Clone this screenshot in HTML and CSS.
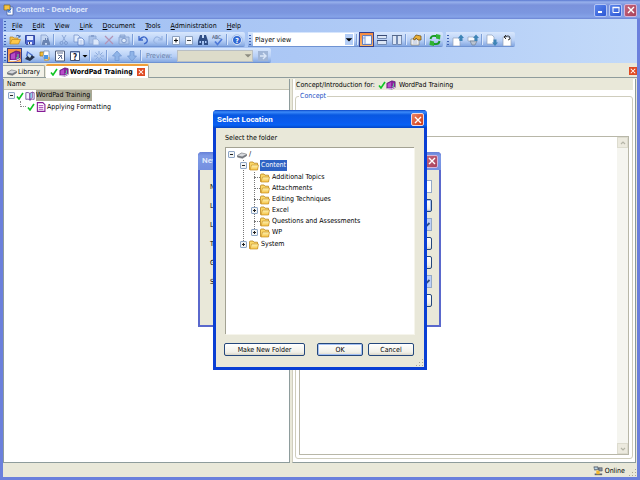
FILE: index.html
```html
<!DOCTYPE html>
<html lang="en">
<head>
<meta charset="utf-8">
<title>Content - Developer</title>
<link rel="stylesheet" href="styles.css">
</head>
<body>
<svg class="sprite" aria-hidden="true">
  <defs>
    <linearGradient id="gold" x1="0" y1="0" x2="0" y2="1"><stop offset="0" stop-color="#fff6b8"/><stop offset="1" stop-color="#f5c040"/></linearGradient>
  </defs>
  <symbol id="folder" viewBox="0 0 10 10"><path d="M.5 8.500V2q0-1 1-1h2.500l1 1.200h3.500v6.300z" fill="#fbd868" stroke="#b9841a" stroke-width=".8"/><path d="M1 9 2.500 4h7L8.500 9z" fill="url(#gold)" stroke="#c8922a" stroke-width=".7"/></symbol>
  <symbol id="open" viewBox="0 0 12 12"><path d="M1 10V3h3l1 1h4v2" fill="#f3c14a" stroke="#b88420" stroke-width=".7"/><path d="m1 10 2-4.500h8.500l-2 4.500z" fill="#ffc84a" stroke="#c08a20" stroke-width=".7"/><path d="M7 2q2-2 4 1M11 1v2H9" fill="none" stroke="#3f66a8"/></symbol>
  <symbol id="save" viewBox="0 0 12 12"><path d="M1.500 1.500h9v9h-8l-1-1z" fill="#4d67cf" stroke="#3448a0"/><path d="M3 2h6v4H3z" fill="#dfe9ff"/><path d="M4 8h4v2.500H4z" fill="#eef"/><path d="M5 8h1v2H5z" fill="#334"/></symbol>
  <symbol id="find" viewBox="0 0 12 12"><path d="M2 1h5l2 2v8H2z" fill="#c4d6f1" stroke="#7f9ac8" stroke-width=".7"/><path d="M4 6h2v-2h1v2h1V4h1l2 5v2H8V9H6v2H3V9z" fill="#6b84b2"/></symbol>
  <symbol id="cut" viewBox="0 0 12 12"><path d="m8 1-4 7M4 1l4 7" fill="none" stroke="#8faad8"/><circle cx="3.500" cy="9" r="1.500" fill="none" stroke="#7d9bd0"/><circle cx="8" cy="9" r="1.500" fill="none" stroke="#7d9bd0"/></symbol>
  <symbol id="copy" viewBox="0 0 12 12"><path d="M1 1h4l2 2v5H1z" fill="#dce9fc" stroke="#7894cc" stroke-width=".8"/><path d="M5 4h4l2 2v5H5z" fill="#edf4ff" stroke="#5c7fc4" stroke-width=".8"/><path d="M6.500 7h3M6.500 9h3" stroke="#84a2da" stroke-width=".7"/></symbol>
  <symbol id="paste" viewBox="0 0 12 12"><path d="M1 2h7v8H1z" fill="#a9c1e8" stroke="#89a5d4" stroke-width=".8"/><path d="M3 1h3v2H3z" fill="#88a2cf"/><path d="M5 5h4l2 2v4H5z" fill="#dce8fa" stroke="#91abd8" stroke-width=".8"/></symbol>
  <symbol id="delete" viewBox="0 0 12 12"><path d="m2 2 8 8M10 2 2 10" stroke="#b394b6" stroke-width="1.200"/></symbol>
  <symbol id="camera" viewBox="0 0 12 12"><path d="M1 3h10v7H1zM2 1h5v2H2z" fill="#b4c9ec" stroke="#829fce" stroke-width=".8"/><circle cx="6" cy="6.500" r="2.300" fill="#dce9fa" stroke="#7d99cb"/></symbol>
  <symbol id="undo" viewBox="0 0 12 12"><path d="M2 2v4h4M2.500 5.500Q7 1 9.500 4.500T7 10" fill="none" stroke="#3c67c9" stroke-width="1.300"/></symbol>
  <symbol id="redo" viewBox="0 0 12 12"><path d="M10 2v4H6M9.500 5.500Q5 1 2.500 4.500T5 10" fill="none" stroke="#98b4e2" stroke-width="1.200"/></symbol>
  <symbol id="plus" viewBox="0 0 12 12"><path d="M2.500 2.500h7v8h-7z" fill="#f8fbff" stroke="#8298b8" stroke-width=".9"/><path d="M4 6.500h4M6 4.500v4" stroke="#111" stroke-width="1.100"/></symbol>
  <symbol id="minus" viewBox="0 0 12 12"><path d="M2.500 2.500h7v8h-7z" fill="#f4f8ff" stroke="#8298b8" stroke-width=".9"/><path d="M4 6.500h4" stroke="#444"/></symbol>
  <symbol id="binoc" viewBox="0 0 12 12"><path d="M3 1h2v3h2V1h2l2 6v4H7V7H5v4H1V7z" fill="#304e86"/><path d="M2.500 7h1.500v2H2.500zM8 7h1.500v2H8z" fill="#a9c8f8"/></symbol>
  <symbol id="grid" viewBox="0 0 12 12"><path d="M1.500 1.500h9v9h-9z" fill="#dce9ff" stroke="#647ebd"/><path d="M4 2v8M2 4h2" stroke="#829ace" stroke-width=".8"/><path d="M5 3h5v6H5z" fill="#f7fbff"/></symbol>
  <symbol id="rows" viewBox="0 0 12 12"><path d="M1.500 1.500h9v3h-9zM1.500 6.500h9v4h-9z" fill="#dce6f5" stroke="#748bb2"/><path d="M1 1.500h10M1 6.500h10" stroke="#394b75"/></symbol>
  <symbol id="cols" viewBox="0 0 12 12"><path d="M1.500 1.500h4v9h-4zM6.500 1.500h4v9h-4z" fill="#dce6f5" stroke="#748bb2"/><path d="M1 1.500h10" stroke="#566889"/></symbol>
  <symbol id="props" viewBox="0 0 12 12"><path d="M1 5h8v6H1z" fill="#fff" stroke="#8b8b80" stroke-width=".8"/><path d="M2.500 7h5M2.500 9h5" stroke="#8094ba" stroke-width=".7"/><path d="m3 5 3-4 5 1v4H8L6 4 5 6z" fill="#e9af36" stroke="#75551c" stroke-width=".8"/></symbol>
  <symbol id="refresh" viewBox="0 0 12 12"><path d="M1.500 5Q2 1.500 6 2h2M10.500 7Q10 10.500 6 10H4" fill="none" stroke="#189a24" stroke-width="1.800"/><path d="M7 0 11.500 1 11 5.500 7 4.500zM5 12 .5 11 1 6.500l4 1z" fill="#30b432"/></symbol>
  <symbol id="doc-up" viewBox="0 0 12 12"><path d="M1 4h5l2 2v6H1z" fill="#fff" stroke="#8fa1bc" stroke-width=".7"/><path d="M9 .5 12 4h-1.500v3h-3V4H6z" fill="#3e84b6"/></symbol>
  <symbol id="globe-up" viewBox="0 0 12 12"><path d="M1 3h7v4H1z" fill="#f7f9fc" stroke="#8fa1bc" stroke-width=".7"/><path d="M3 7h7l-2 4H5z" fill="#b9c3d0" stroke="#6f8096" stroke-width=".7"/><path d="M9 .5 12 4h-1.500v3h-3V4H6z" fill="#3e84b6"/></symbol>
  <symbol id="doc-down" viewBox="0 0 12 12"><path d="M1 1h5l2 2v7H1z" fill="#fff" stroke="#8fa1bc" stroke-width=".7"/><path d="M9 12 6 8.500h1.500v-3h3v3H12z" fill="#3e84b6"/></symbol>
  <symbol id="doc-back" viewBox="0 0 12 12"><path d="M2 3h5l3 2v7H2z" fill="#fff" stroke="#8fa1bc" stroke-width=".7"/><path d="M4 3q5-3 5 2l-2 1M5 1 3 3l2 2" fill="none" stroke="#333" stroke-width="1"/></symbol>
  <symbol id="book" viewBox="0 0 12 12"><path d="m1 4 6-3 4 1v7l-4 2-6-1z" fill="#8c239e" stroke="#4e0f67" stroke-width=".7"/><path d="m2 4.500 4-1.800v6L2 9z" fill="#b84cc9"/><path d="M1 10.500h6l4-2" stroke="#eef" fill="none"/><path d="M9 4v4H7" fill="none" stroke="#52e090"/></symbol>
  <symbol id="layers" viewBox="0 0 12 12"><path d="m3 1 6 4-1 5-6-4z" fill="#4b6fd0"/><path d="m5 4 6 3-5 4-5-2z" fill="#26334d"/><path d="m4 3 3.500 2.500L6 8 3.500 6z" fill="#bfdcf6"/></symbol>
  <symbol id="pages" viewBox="0 0 12 12"><path d="M1 2h6v4H1z" fill="#f4be35" stroke="#8f6b18" stroke-width=".7"/><path d="M5 1h5v8l-3 2-3-4z" fill="#fff" stroke="#7089a9" stroke-width=".7"/><path d="M5 5h4v4H5z" fill="#4a96e7"/><path d="M5 10h5V7" fill="none" stroke="#e3a325"/></symbol>
  <symbol id="sheet" viewBox="0 0 12 12"><path d="M1.500 1h9v10h-9z" fill="#fff" stroke="#4d5b79"/><path d="M3 3h6M4 9l4-4M4 5q4 0 4 4" fill="none" stroke="#5c6c91"/></symbol>
  <symbol id="spark" viewBox="0 0 12 12"><path d="M6 1v10M1 6h10M2.500 2.500l7 7M9.500 2.500l-7 7" stroke="#8ba9da"/><circle cx="6" cy="6" r="1.800" fill="#b9cfef"/></symbol>
  <symbol id="up" viewBox="0 0 12 12"><path d="m6 1 4.500 5H8v4.500H4V6H1.500z" fill="#8fb4e8" stroke="#7298d2" stroke-width=".8"/></symbol>
  <symbol id="down" viewBox="0 0 12 12"><path d="m6 11 4.500-5H8V1.500H4V6H1.500z" fill="#8fb4e8" stroke="#7298d2" stroke-width=".8"/></symbol>
  <symbol id="go" viewBox="0 0 12 12"><path d="M1 1h10v10H1z" fill="#a0b5d6"/><path d="M3 6h5M6 3l3 3-3 3" stroke="#dbe7f8" fill="none" stroke-width="1.400"/></symbol>
  <symbol id="drive" viewBox="0 0 12 10"><path d="m.5 5.500 5-3 6 1.500v2l-5 3-6-1.500z" fill="#777b82" stroke="#55585e" stroke-width=".6"/><path d="m.8 5.500 4.800-2.700 5.500 1.300-4.800 2.800z" fill="#d6d8dc"/></symbol>
  <symbol id="check" viewBox="0 0 8 8"><path d="m1 4.500 2 2.500L7 1" fill="none" stroke="#10c424" stroke-width="1.600"/></symbol>
  <symbol id="openbook" viewBox="0 0 12 12"><path d="M1 2q3-1 5 1v8q-2-2-5-1zM11 2Q8 1 6 3v8q2-2 5-1z" fill="#f6f2ff" stroke="#5c3489" stroke-width=".9"/><path d="m6 3 3-2v7L6 10z" fill="#8cd3ea" stroke="#8b2b9b" stroke-width=".7"/></symbol>
  <symbol id="topic" viewBox="0 0 10 11"><path d="M1 .7h6l2.300 2.300v7.300H1z" fill="#fff" stroke="#851b96" stroke-width="1.200"/><path d="M2.500 4h5M2.500 6h5M2.500 8h5" stroke="#a43ab2"/></symbol>
  <symbol id="app" viewBox="0 0 12 12"><path d="M4 3h6v8H4z" fill="#fff" stroke="#4d66a4" stroke-width=".8"/><path d="M1 1h6v5H1z" fill="#f7c443" stroke="#7f651d" stroke-width=".7"/><path d="M5 7q3 0 3-3M8 8H5V5" stroke="#2869ce" fill="none"/></symbol>
  <symbol id="x" viewBox="0 0 8 8"><path d="m1 1 6 6m0-6-6 6" stroke="#fff" stroke-width="1.400"/></symbol>
  <symbol id="min" viewBox="0 0 8 8"><path d="M1 6h4" stroke="#fff" stroke-width="2"/></symbol>
  <symbol id="max" viewBox="0 0 8 8"><path d="M1 1.500h6v5H1z" fill="none" stroke="#fff"/><path d="M.5 1.500h7" stroke="#fff" stroke-width="1.500"/></symbol>
  <symbol id="online" viewBox="0 0 12 12"><path d="M1 1h5l1 3-5 1zM7 2h4v4H7z" fill="#8792a2" stroke="#3d4550" stroke-width=".6"/><path d="M2 9h9v2H2z" fill="#5a6371"/><path d="m4 5 4 1v4H4z" fill="#f3b92c"/><path d="M2 2h3v1.500H2z" fill="#bddcf0"/></symbol>
  <symbol id="chev" viewBox="0 0 6 6"><path d="m1 2 2 2 2-2" fill="none" stroke="currentColor" stroke-width="1.200"/></symbol>
  <symbol id="chevup" viewBox="0 0 6 6"><path d="m1 4 2-2 2 2" fill="none" stroke="currentColor" stroke-width="1.200"/></symbol>
  <symbol id="tri" viewBox="0 0 6 6"><path d="M.5 2h5L3 4.500z" fill="currentColor"/></symbol>
  <symbol id="size" viewBox="0 0 8 8"><path d="M6 0h1v1H6zM3 3h1v1H3zM6 3h1v1H6zM0 6h1v1H0zM3 6h1v1H3zM6 6h1v1H6z" fill="#a9a794"/></symbol>
</svg>

<div class="app">
  <header class="titlebar">
    <svg class="i12"><use href="#app"/></svg>
    <h1>Content - Developer</h1>
    <div class="winbtns">
      <button class="wb" aria-label="Minimize"><svg class="i8"><use href="#min"/></svg></button>
      <button class="wb" aria-label="Maximize"><svg class="i8"><use href="#max"/></svg></button>
      <button class="wb wb-close dim" aria-label="Close"><svg class="i8"><use href="#x"/></svg></button>
    </div>
  </header>

  <div class="bars">
    <nav class="menu">
      <span class="grip"></span>
      <button><u>F</u>ile</button><button><u>E</u>dit</button><button><u>V</u>iew</button><button><u>L</u>ink</button><button><u>D</u>ocument</button><button><u>T</u>ools</button><button><u>A</u>dministration</button><button><u>H</u>elp</button>
    </nav>
    <div class="toolrow">
      <div class="toolbar">
        <span class="grip"></span>
        <button class="tb" aria-label="Open"><svg class="i12"><use href="#open"/></svg></button>
        <button class="tb" aria-label="Save"><svg class="i12"><use href="#save"/></svg></button>
        <button class="tb" aria-label="Preview"><svg class="i12"><use href="#find"/></svg></button>
        <span class="sep"></span>
        <button class="tb" aria-label="Cut"><svg class="i12"><use href="#cut"/></svg></button>
        <button class="tb" aria-label="Copy"><svg class="i12"><use href="#copy"/></svg></button>
        <button class="tb" aria-label="Paste"><svg class="i12"><use href="#paste"/></svg></button>
        <button class="tb" aria-label="Delete"><svg class="i12"><use href="#delete"/></svg></button>
        <button class="tb" aria-label="Capture"><svg class="i12"><use href="#camera"/></svg></button>
        <span class="sep"></span>
        <button class="tb" aria-label="Undo"><svg class="i12"><use href="#undo"/></svg></button>
        <button class="tb" aria-label="Redo"><svg class="i12"><use href="#redo"/></svg></button>
        <span class="sep"></span>
        <button class="tb slim" aria-label="Expand"><svg class="i12"><use href="#plus"/></svg></button>
        <button class="tb slim" aria-label="Collapse"><svg class="i12"><use href="#minus"/></svg></button>
        <button class="tb" aria-label="Find"><svg class="i12"><use href="#binoc"/></svg></button>
        <button class="tb" aria-label="Spelling"><svg class="i12" viewBox="0 0 12 12"><text x="0" y="5" font-size="5" fill="#333c60">ABC</text><path d="m3 7.500 2.500 3L10 5" fill="none" stroke="#4d78d8" stroke-width="1.700"/></svg></button>
        <span class="sep"></span>
        <button class="tb" aria-label="Help"><svg class="i12" viewBox="0 0 12 12"><circle cx="6" cy="6" r="5.200" fill="#f2f7ff" stroke="#90aee0" stroke-width=".8"/><circle cx="6" cy="6" r="4" fill="#2f67d2"/><text x="6" y="8.500" font-size="7" font-weight="bold" text-anchor="middle" fill="#fff">?</text></svg></button>
      </div>
      <div class="toolbar">
        <span class="grip"></span>
        <div class="combo view"><select aria-label="View"><option>Player view</option></select><svg class="i6"><use href="#tri"/></svg></div>
        <span class="sep"></span>
        <button class="tb on" aria-label="Layout"><svg class="i12"><use href="#grid"/></svg></button>
        <button class="tb" aria-label="Split rows"><svg class="i12"><use href="#rows"/></svg></button>
        <button class="tb" aria-label="Split columns"><svg class="i12"><use href="#cols"/></svg></button>
        <span class="sep"></span>
        <button class="tb" aria-label="Properties"><svg class="i12"><use href="#props"/></svg></button>
        <span class="sep"></span>
        <button class="tb" aria-label="Refresh"><svg class="i12"><use href="#refresh"/></svg></button>
      </div>
      <div class="toolbar">
        <span class="grip"></span>
        <button class="tb" aria-label="Check in"><svg class="i12"><use href="#doc-up"/></svg></button>
        <button class="tb" aria-label="Check in all"><svg class="i12"><use href="#globe-up"/></svg></button>
        <span class="sep"></span>
        <button class="tb" aria-label="Check out"><svg class="i12"><use href="#doc-down"/></svg></button>
        <button class="tb" aria-label="Cancel check out"><svg class="i12"><use href="#doc-back"/></svg></button>
      </div>
    </div>
    <div class="toolrow">
      <div class="toolbar">
        <span class="grip"></span>
        <button class="tb on" aria-label="Module"><svg class="i12"><use href="#book"/></svg></button>
        <button class="tb" aria-label="Section"><svg class="i12"><use href="#layers"/></svg></button>
        <button class="tb" aria-label="Topic"><svg class="i12"><use href="#pages"/></svg></button>
        <button class="tb" aria-label="Existing"><svg class="i12"><use href="#sheet"/></svg></button>
        <button class="tb" aria-label="Question"><svg class="i12" viewBox="0 0 12 12"><path d="M1.500 1.500h9v9h-9z" fill="#fff" stroke="#435275"/><path d="M2 2h8" stroke="#5473b5"/><text x="6" y="9.500" font-size="8" font-weight="bold" text-anchor="middle" fill="#223">?</text></svg></button>
        <button class="tb tiny" aria-label="More"><svg class="i6"><use href="#tri"/></svg></button>
        <span class="sep"></span>
        <button class="tb slim" aria-label="New link"><svg class="i12"><use href="#spark"/></svg></button>
        <span class="sep"></span>
        <button class="tb" aria-label="Move up"><svg class="i12"><use href="#up"/></svg></button>
        <button class="tb" aria-label="Move down"><svg class="i12"><use href="#down"/></svg></button>
        <span class="sep"></span>
        <label class="off" for="preview">Preview:</label>
        <div class="combo preview"><select id="preview" disabled></select><svg class="i6"><use href="#tri"/></svg></div>
        <button class="tb" aria-label="Go"><svg class="i12"><use href="#go"/></svg></button>
      </div>
    </div>
  </div>

  <div class="tabs">
    <button class="tab"><svg class="i10"><use href="#drive"/></svg>Library</button>
    <button class="tab current"><svg class="i8"><use href="#check"/></svg><svg class="i10"><use href="#book"/></svg>WordPad Training<span class="redx"><svg class="i6"><use href="#x"/></svg></span></button>
    <button class="redx end" aria-label="Close tab"><svg class="i6"><use href="#x"/></svg></button>
  </div>

  <main class="panes">
    <section class="outline">
      <h2>Name</h2>
      <ul class="doc">
        <li><i class="exp"></i><svg class="i8"><use href="#check"/></svg><svg class="i10"><use href="#openbook"/></svg><span class="marked">WordPad Training</span></li>
        <li class="sub"><i class="elbow"></i><svg class="i8"><use href="#check"/></svg><svg class="i10"><use href="#topic"/></svg><span>Applying Formatting</span></li>
      </ul>
    </section>
    <section class="detail">
      <div class="about">Concept/Introduction for: <svg class="i8"><use href="#check"/></svg><svg class="i10"><use href="#book"/></svg><span>WordPad Training</span></div>
      <fieldset>
        <legend>Concept</legend>
        <div class="editor">
          <textarea aria-label="Concept"></textarea>
          <div class="scroll"><button aria-label="Scroll up"><svg class="i6"><use href="#chevup"/></svg></button><button aria-label="Scroll down"><svg class="i6"><use href="#chev"/></svg></button></div>
        </div>
      </fieldset>
    </section>
  </main>

  <footer class="status"><svg class="i10"><use href="#online"/></svg><span>Online</span><svg class="i8 corner"><use href="#size"/></svg></footer>
</div>

<div class="dialog back">
  <div class="dlgtitle"><h2>New</h2><button class="wb wb-close dim" aria-label="Close"><svg class="i8"><use href="#x"/></svg></button></div>
  <div class="form">
    <label for="f1">N</label><input id="f1" type="text">
    <label for="f2">L</label><button class="btn focus" id="f2"></button>
    <label for="f3">L</label><div class="drop"><select id="f3"></select><svg class="i6"><use href="#chev"/></svg></div>
    <label for="f4">T</label><button class="btn" id="f4"></button>
    <label for="f5">G</label><button class="btn" id="f5"></button>
    <label for="f6">S</label><div class="drop"><select id="f6"></select><svg class="i6"><use href="#chev"/></svg></div>
    <span></span><button class="btn" aria-label="Cancel new"></button>
  </div>
</div>

<div class="dialog front" role="dialog" aria-labelledby="dt">
  <div class="dlgtitle"><h2 id="dt">Select Location</h2><button class="wb wb-close" aria-label="Close"><svg class="i8"><use href="#x"/></svg></button></div>
  <div class="body">
    <p>Select the folder</p>
    <div class="treebox">
      <ul class="tree">
        <li><div class="row"><i class="exp"></i><svg class="i10"><use href="#drive"/></svg><span>/</span></div>
          <ul>
            <li><div class="row"><i class="exp"></i><svg class="i10"><use href="#folder"/></svg><span class="sel">Content</span></div>
              <ul class="deep">
                <li><div class="row"><i class="leaf"></i><svg class="i10"><use href="#folder"/></svg><span>Additional Topics</span></div></li>
                <li><div class="row"><i class="leaf"></i><svg class="i10"><use href="#folder"/></svg><span>Attachments</span></div></li>
                <li><div class="row"><i class="leaf"></i><svg class="i10"><use href="#folder"/></svg><span>Editing Techniques</span></div></li>
                <li><div class="row"><i class="exp closed"></i><svg class="i10"><use href="#folder"/></svg><span>Excel</span></div></li>
                <li><div class="row"><i class="leaf"></i><svg class="i10"><use href="#folder"/></svg><span>Questions and Assessments</span></div></li>
                <li><div class="row"><i class="exp closed"></i><svg class="i10"><use href="#folder"/></svg><span>WP</span></div></li>
              </ul>
            </li>
            <li><div class="row"><i class="exp closed"></i><svg class="i10"><use href="#folder"/></svg><span>System</span></div></li>
          </ul>
        </li>
      </ul>
    </div>
    <div class="actions">
      <button class="btn wide">Make New Folder</button>
      <button class="btn focus">OK</button>
      <button class="btn">Cancel</button>
    </div>
  </div>
  <svg class="i8 corner"><use href="#size"/></svg>
</div>
</body>
</html>
```
FILE: styles.css
```css
:root {
  --face: #e9e8d9;
  --blue: #0a3fd4;
  --ui: "DejaVu Sans Condensed", "DejaVu Sans", sans-serif;
}

* { box-sizing: border-box; }

body {
  margin: 0;
  font: 7px/10px var(--ui);
  color: #000;
}

button, input, select, textarea {
  font: inherit;
  color: inherit;
  margin: 0;
  padding: 0;
  border: 0;
  background: none;
}

select { appearance: none; }
h1, h2, p, ul { margin: 0; padding: 0; font-weight: normal; font-size: inherit; }
ul { list-style: none; }
svg { flex: none; display: block; }
u { text-underline-offset: 1px; }

.sprite { position: absolute; width: 0; height: 0; }
.i6 { width: 6px; height: 6px; }
.i8 { width: 8px; height: 8px; }
.i10 { width: 10px; height: 10px; }
.i12 { width: 12px; height: 12px; }

.app {
  min-height: 100vh;
  display: flex;
  flex-direction: column;
  background: var(--face);
  border: solid #6b80dc;
  border-width: 0 3px 3px;
}

.titlebar {
  height: 19px;
  margin: 0 -3px;
  padding: 1px 3px 0;
  display: flex;
  align-items: center;
  gap: 1px;
  background: linear-gradient(#5a78d0, #98b1ec 2px, #7a92dc 5px, #7c97e0 13px, #86a3e8 17px, #6a84d4);
}

.titlebar h1, .dlgtitle h2 {
  flex: 1;
  font: bold 8px/12px Roboto, sans-serif;
  color: #dce6fb;
}

.winbtns { display: flex; gap: 2px; }

.wb {
  width: 13px;
  height: 13px;
  display: grid;
  place-items: center;
  border: 1px solid #b4c5f4;
  border-radius: 2px;
  background: linear-gradient(135deg, #5c86ec, #2c57d4);
}

.wb-close { background: linear-gradient(135deg, #ee8464, #cc3a14); border-color: #f0d8dc; }
.wb-close.dim { background: linear-gradient(135deg, #c4677c, #a8405a); border-color: #d6b4d8; }

.bars {
  display: flex;
  flex-direction: column;
  background: linear-gradient(90deg, #9fbef2, #b0cbf6 60%, #c3daf9);
}

.menu { height: 13px; display: flex; align-items: center; }
.menu button { padding: 0 5px; }

.grip {
  width: 2px;
  height: 10px;
  margin: 0 1px;
  background: repeating-linear-gradient(#3f62b4 0 1px, transparent 1px 3px);
}

.toolrow { display: flex; gap: 3px; }
.toolrow + .toolrow { margin-top: 1px; }

.toolbar {
  height: 15px;
  display: flex;
  align-items: center;
  padding-right: 1px;
  border-radius: 0 2px 2px 0;
  background: linear-gradient(#d8e7fd, #b8d0f6 55%, #86a9e2 93%, #5a7fc4);
}

.tb { width: 15px; height: 15px; display: grid; place-items: center; }
.tb.slim { width: 13px; }
.tb.tiny { width: 6px; }
.tb.on { border: 1px solid #34408c; background: linear-gradient(#f58a40, #fbb668); }
.sep { width: 1px; height: 11px; margin: 0 2px 0 1px; background: #7d9fd8; box-shadow: 1px 0 #dbe8fc; }

.combo, .drop { display: flex; align-items: center; background: #fff; }
.combo select, .drop select { flex: 1; min-width: 0; height: 100%; padding-left: 2px; }
.combo svg { width: 8px; height: 11px; background: #b3cdf6; }
.combo.view { width: 101px; height: 13px; padding-right: 1px; margin: 0 1px; }
.combo.preview { width: 76px; height: 12px; margin: 0 2px 0 5px; background: #dddcca; color: #8c8c80; border: 1px solid #b9bfc4; }
.combo.preview svg { background: none; }
.off { color: #667da8; padding-left: 3px; }

.tabs {
  height: 14px;
  margin-top: 1px;
  display: flex;
  align-items: flex-end;
  gap: 1px;
  border-bottom: 1px solid #8f9c9c;
}

.tab {
  height: 12px;
  display: flex;
  align-items: center;
  gap: 1px;
  padding: 0 4px;
  border: solid #a3a89e;
  border-width: 1px 1px 0 0;
  border-radius: 0 2px 0 0;
  background: #f2f1e8;
}

.tab.current {
  height: 14px;
  margin-bottom: -1px;
  padding: 0 3px 0 4px;
  border-top: 2px solid #f0a03a;
  border-radius: 2px 2px 0 0;
  background: #fff;
  font-weight: bold;
}

.redx { width: 8px; height: 8px; background: #df4a22; display: grid; place-items: center; margin-left: 3px; }
.redx.end { margin: 0 0 2px auto; }

.panes {
  flex: 1;
  display: grid;
  grid-template-columns: 287fr 344fr;
  gap: 2px;
  padding: 1px 1px 0 0;
}

.outline, .detail { background: #fff; border: 1px solid #8e9c9c; border-top: 0; }
.outline h2 { height: 11px; padding-left: 3px; background: var(--face); border-bottom: 1px solid #c6c4b2; }
.doc li { height: 11px; display: flex; align-items: center; gap: 1px; padding-left: 4px; }
.doc li.sub { padding-left: 16px; }
.marked { background: #aaa794; height: 11px; padding: 0 2px 0 0; }
.elbow { width: 6px; height: 6px; margin-bottom: 6px; border: dotted #888; border-width: 0 0 1px 1px; }

.detail { display: flex; flex-direction: column; padding: 0 2px 3px; border-left-color: #d0cebe; }
.about { height: 11px; display: flex; align-items: center; padding-left: 1px; background: var(--face); }
.about .i8 { margin-left: 3px; }
.about span { margin-left: 3px; }

fieldset {
  flex: 1;
  display: flex;
  min-width: 0;
  margin: 1px 0 0;
  padding: 35px 3px 3px;
  border: 1px solid #cfcdbd;
  border-radius: 3px;
}

legend { padding: 0 1px; color: #1c4fc4; }
.editor { flex: 1; display: flex; border: 1px solid #b8b7a8; }
.editor textarea { flex: 1; min-width: 0; resize: none; }

.scroll { width: 11px; display: flex; flex-direction: column; justify-content: space-between; background: #f5f5f0; }
.scroll button { height: 11px; display: grid; place-items: center; color: #b5b5a8; background: #eceadf; border: 1px solid #dddccf; }

.status { height: 14px; padding-top: 2px; display: flex; align-items: center; justify-content: flex-end; gap: 2px; }
.status .corner { margin-left: 2px; align-self: flex-end; }

.dialog { position: absolute; background: var(--face); border-radius: 4px 4px 0 0; }

.dlgtitle {
  display: flex;
  align-items: center;
  height: 18px;
  border-radius: 4px 4px 0 0;
}

.back {
  left: 198px;
  top: 152px;
  width: 243px;
  height: 175px;
  border: solid #5a68cc;
  border-width: 0 2px 2px;
}

.back .dlgtitle { margin: 0 -2px; padding: 0 3px 0 4px; background: linear-gradient(#6680d8, #7f9ae6 4px, #748fe0); }

.form {
  display: grid;
  grid-template-columns: 1fr 30px;
  grid-template-rows: repeat(7, 13px);
  gap: 6px;
  align-items: center;
  padding: 10px 7px 0 10px;
}

.form input, .drop { height: 13px; border: 1px solid #93a9c8; background: #fff; }
.form .btn { height: 13px; }
.drop svg { width: 9px; height: 11px; background: #bdd0f8; color: #35507f; }

.front {
  left: 213px;
  top: 110px;
  width: 214px;
  border: solid var(--blue);
  border-width: 0 3px 3px;
}

.front .dlgtitle { margin: 0 -3px; padding: 1px 3px 0 4px; background: linear-gradient(#0a47c8, #3c8bfa 2px, #0858e2 5px, #0a5cf0 13px, #0862f4 15px, #0444c4); }
.front .dlgtitle h2 { color: #fff; }
.body { padding: 5px 10px 11px 8px; }
.body p { padding: 0 0 4px 1px; height: 14px; line-height: 10px; }

.treebox {
  height: 187px;
  margin-left: 1px;
  padding: 1px 2px;
  background: #fff;
  border: solid #a3a293;
  border-width: 1px 0 0 1px;
  box-shadow: 1px 1px #f6f5ec;
}

.tree ul { padding-left: 12px; position: relative; }
.tree .deep { padding-left: 11px; margin: 1px 0; }
.row { height: 11px; display: flex; align-items: center; gap: 2px; position: relative; }
.row span { line-height: 11px; padding-right: 1px; }
.row .sel { color: #fff; background: #2f63c4; box-shadow: -1px 0 #2f63c4; }

.exp {
  flex: none;
  width: 7px;
  height: 7px;
  border: 1px solid #8ea6c6;
  border-radius: 1px;
  background: linear-gradient(#222, #222) 50% 50% / 3px 1px no-repeat #f3f5f5;
  position: relative;
  z-index: 1;
}

.exp.closed {
  background: linear-gradient(#222, #222) 50% 50% / 3px 1px no-repeat, linear-gradient(#222, #222) 50% 50% / 1px 3px no-repeat, #f3f5f5;
}

.leaf { flex: none; width: 7px; height: 7px; }
.leaf::after { content: ""; display: block; margin: 3px 0 0 3px; width: 6px; border-top: 1px dotted #777; }

/* vertical guide that joins the siblings of a branch */
.tree ul::before {
  content: "";
  position: absolute;
  left: 15px;
  top: 0;
  bottom: 5px;
  border-left: 1px dotted #777;
}

.tree .deep::before { left: 14px; }

.actions { display: flex; gap: 5px; margin-top: 9px; }

.btn {
  height: 13px;
  width: 46px;
  border: 1px solid #24477c;
  border-radius: 2px;
  background: linear-gradient(#fff, #f1f0e8 75%, #d9d6c8);
  line-height: 10px;
}

.form .btn { width: 100%; }
.btn.wide { width: 81px; margin-right: auto; }
.btn.focus { box-shadow: inset 0 0 0 1px #a4c0f2; }
.front > .corner { position: absolute; right: 0; bottom: 0; }
```
